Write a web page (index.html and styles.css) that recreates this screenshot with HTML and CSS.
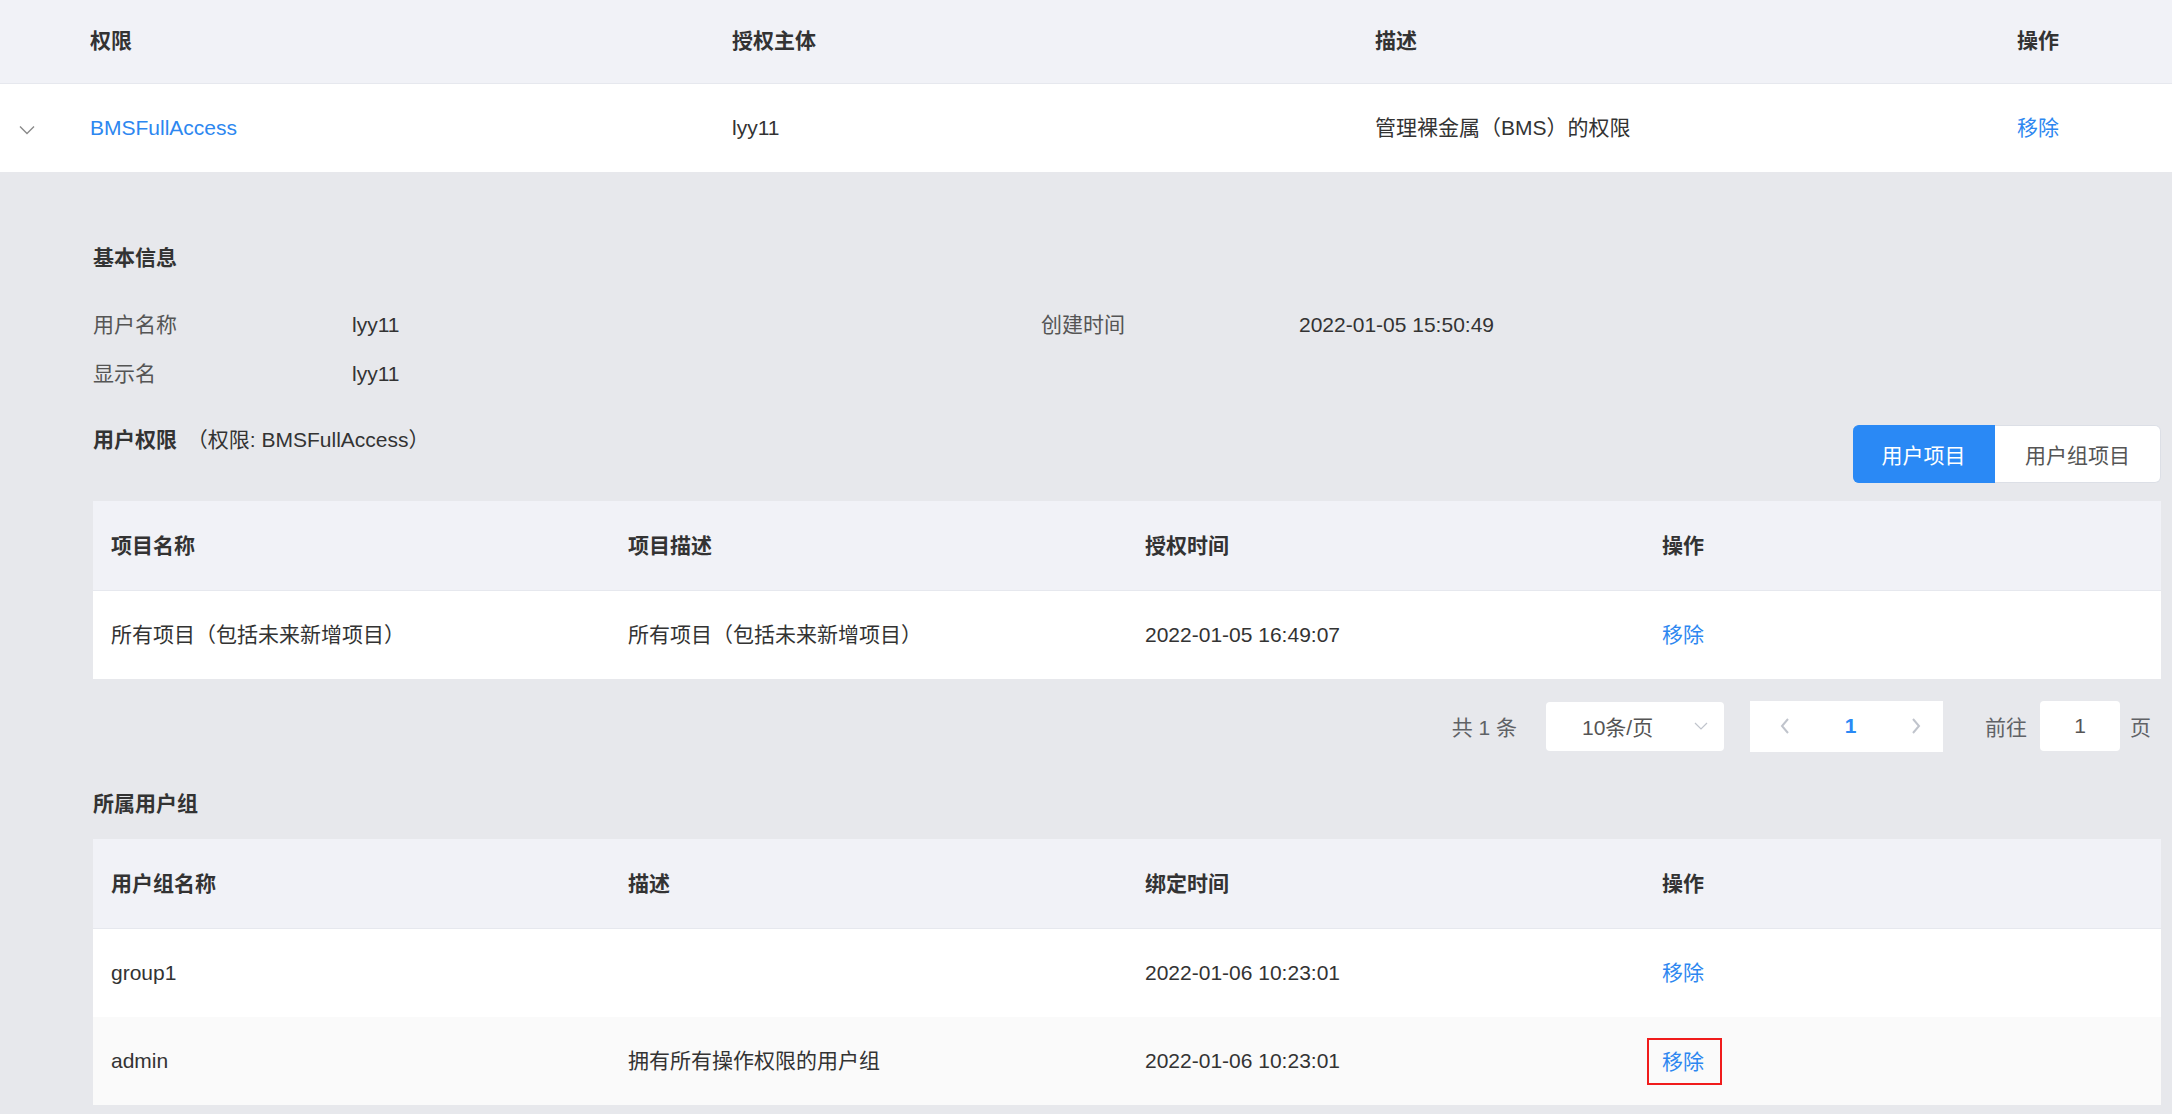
FILE: index.html
```html
<!DOCTYPE html>
<html lang="zh-CN">
<head>
    <meta charset="UTF-8">
    <meta name="viewport" content="width=device-width, initial-scale=1.0">
    <title>权限详情</title>
    <link rel="stylesheet" href="styles.css">
</head>
<body>
    <div class="policy-table">
        <div class="policy-head">
            <div></div>
            <div class="cell">权限</div>
            <div class="cell">授权主体</div>
            <div class="cell">描述</div>
            <div class="cell">操作</div>
        </div>
        <div class="policy-row">
            <div class="expand">
                <svg width="16" height="10" viewBox="0 0 16 10"><polyline points="1,1.5 8,8.5 15,1.5" fill="none" stroke="#8a8a8a" stroke-width="1.4"/></svg>
            </div>
            <div class="cell"><a class="link">BMSFullAccess</a></div>
            <div class="cell">lyy11</div>
            <div class="cell">管理裸金属（BMS）的权限</div>
            <div class="cell"><a class="link">移除</a></div>
        </div>
    </div>

    <div class="detail">
        <div class="section-title">基本信息</div>
        <div class="info">
            <div class="label">用户名称</div>
            <div>lyy11</div>
            <div class="label">创建时间</div>
            <div>2022-01-05 15:50:49</div>
            <div class="label">显示名</div>
            <div>lyy11</div>
            <div></div>
            <div></div>
        </div>

        <div class="perm-bar">
            <div class="section-title">用户权限 <span class="sub">（权限: BMSFullAccess）</span></div>
            <div class="switch">
                <button class="switch-btn active">用户项目</button>
                <button class="switch-btn">用户组项目</button>
            </div>
        </div>

        <div class="grid-table">
            <div class="grid-head">
                <div class="cell">项目名称</div>
                <div class="cell">项目描述</div>
                <div class="cell">授权时间</div>
                <div class="cell">操作</div>
            </div>
            <div class="grid-row">
                <div class="cell">所有项目（包括未来新增项目）</div>
                <div class="cell">所有项目（包括未来新增项目）</div>
                <div class="cell">2022-01-05 16:49:07</div>
                <div class="cell"><a class="link">移除</a></div>
            </div>
        </div>

        <div class="pagination">
            <span class="total">共 1 条</span>
            <div class="page-size">
                <span>10条/页</span>
                <svg width="14" height="8" viewBox="0 0 14 8"><polyline points="1,1 7,7 13,1" fill="none" stroke="#c0c4cc" stroke-width="1.2"/></svg>
            </div>
            <div class="pager">
                <svg width="10" height="18" viewBox="0 0 10 18"><polyline points="8,2 2,9 8,16" fill="none" stroke="#c0c4cc" stroke-width="2"/></svg>
                <span class="page-num">1</span>
                <svg width="10" height="18" viewBox="0 0 10 18"><polyline points="2,2 8,9 2,16" fill="none" stroke="#c0c4cc" stroke-width="2"/></svg>
            </div>
            <span class="jump">前往</span>
            <div class="jump-input">1</div>
            <span class="jump">页</span>
        </div>

        <div class="section-title group-title">所属用户组</div>
        <div class="grid-table">
            <div class="grid-head">
                <div class="cell">用户组名称</div>
                <div class="cell">描述</div>
                <div class="cell">绑定时间</div>
                <div class="cell">操作</div>
            </div>
            <div class="grid-row">
                <div class="cell">group1</div>
                <div class="cell"></div>
                <div class="cell">2022-01-06 10:23:01</div>
                <div class="cell"><a class="link">移除</a></div>
            </div>
            <div class="grid-row striped">
                <div class="cell">admin</div>
                <div class="cell">拥有所有操作权限的用户组</div>
                <div class="cell">2022-01-06 10:23:01</div>
                <div class="cell"><a class="link marked">移除</a></div>
            </div>
        </div>
    </div>
</body>
</html>
```

FILE: styles.css
```css
body {
    margin: 0;
    font-family: 'Liberation Sans', 'Noto Sans CJK SC', sans-serif;
    font-size: 21px;
    color: #333;
    background-color: #e7e8ec;
}

.link {
    color: #2d87f0;
    cursor: pointer;
}

.policy-head,
.policy-row {
    display: grid;
    grid-template-columns: 72px 642px 643px 642px 1fr;
    align-items: center;
}

.policy-head {
    height: 82px;
    padding-bottom: 1px;
    background-color: #f1f2f7;
    border-bottom: 1px solid #e6e8ee;
    font-weight: bold;
}

.policy-row {
    height: 88px;
    background-color: #fff;
}

.cell {
    padding-left: 18px;
    line-height: 30px;
}

.expand {
    display: flex;
    justify-content: flex-start;
    padding-left: 19px;
    padding-top: 4px;
}

.detail {
    padding: 71px 11px 8px 93px;
}

.section-title {
    font-weight: bold;
    line-height: 30px;
}

.sub {
    font-weight: normal;
    margin-left: 4px;
}

.info {
    display: grid;
    grid-template-columns: 259px 689px 258px 1fr;
    line-height: 49px;
    margin-top: 27px;
}

.label {
    color: #555;
}

.perm-bar {
    display: flex;
    justify-content: space-between;
    align-items: flex-start;
    margin-top: 27px;
}

.switch {
    display: flex;
}

.switch-btn {
    height: 58px;
    font-family: inherit;
    font-size: 21px;
    border: 1px solid #dcdfe6;
    background-color: #fff;
    color: #555;
    padding: 0;
    width: 166px;
    border-radius: 0 6px 6px 0;
    border-left: none;
}

.switch-btn.active {
    width: 142px;
    background-color: #2a89f5;
    border-color: #2a89f5;
    color: #fff;
    border-radius: 6px 0 0 6px;
}

.perm-bar + .grid-table {
    margin-top: 18px;
}

.grid-head,
.grid-row {
    display: grid;
    grid-template-columns: repeat(4, 1fr);
    align-items: center;
}

.grid-head {
    height: 89px;
    background-color: #f1f2f7;
    border-bottom: 1px solid #e6e8ee;
    font-weight: bold;
}

.grid-row {
    height: 88px;
    background-color: #fff;
}

.grid-row + .grid-row {
    height: 89px;
}

.grid-row.striped {
    background-color: #fafafa;
    height: 88px;
}

.marked {
    display: inline-block;
    margin-left: -15px;
    padding: 7px 16px 6px 13px;
    border: 2px solid #f01c1c;
    line-height: 30px;
}

.pagination {
    display: flex;
    justify-content: flex-end;
    align-items: center;
    margin-top: 22px;
    padding-right: 10px;
    height: 50px;
    color: #606266;
}

.total {
    margin-right: 29px;
}

.page-size {
    width: 178px;
    height: 49px;
    box-sizing: border-box;
    background-color: #fff;
    border-radius: 4px;
    display: flex;
    align-items: center;
    justify-content: space-between;
    padding: 0 16px 0 36px;
    color: #555;
    margin-right: 26px;
}

.pager {
    width: 193px;
    height: 51px;
    box-sizing: border-box;
    background-color: #fff;
    display: flex;
    align-items: center;
    justify-content: space-between;
    padding: 0 22px 0 30px;
    margin-right: 42px;
}

.page-num {
    color: #2a89f5;
    font-weight: bold;
}

.jump-input {
    width: 80px;
    height: 50px;
    line-height: 50px;
    text-align: center;
    background-color: #fff;
    border-radius: 4px;
    margin: 0 10px 0 13px;
    color: #555;
}

.group-title {
    margin-top: 38px;
    margin-bottom: 20px;
}
```
